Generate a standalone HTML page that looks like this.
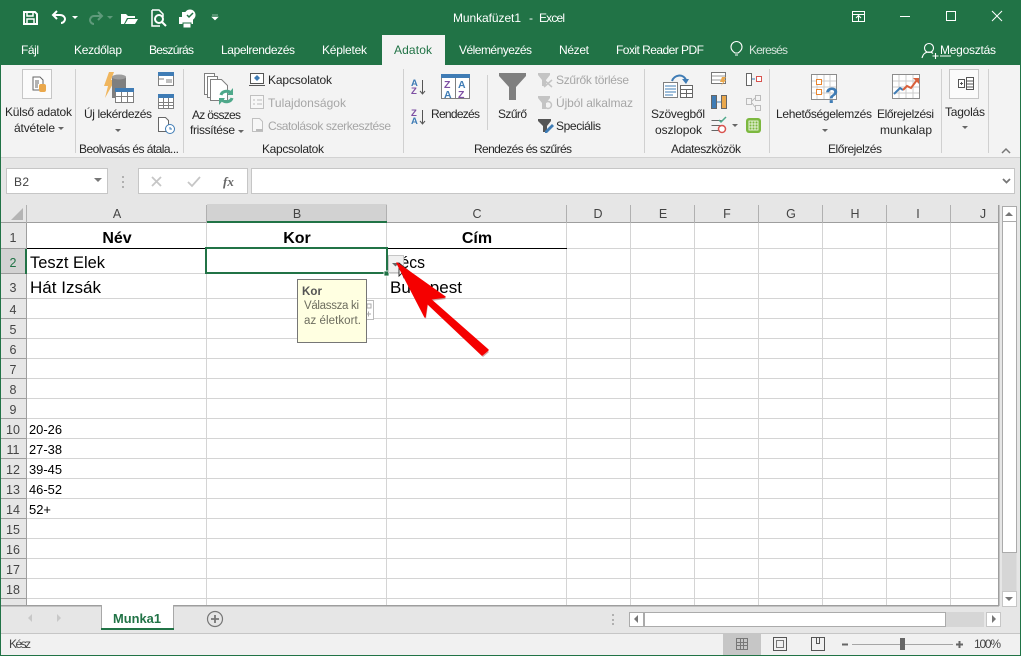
<!DOCTYPE html>
<html lang="hu"><head><meta charset="utf-8"><title>Munkafüzet1 - Excel</title>
<style>
html,body{margin:0;padding:0;background:#fff;width:1021px;height:656px;overflow:hidden}
svg{display:block;position:absolute;left:0;top:0}
text{font-family:"Liberation Sans",sans-serif;font-size:12px;fill:#262626}
.w{fill:#fff}.t{fill:#fff;font-size:12px}.g{fill:#a6a6a6}
.h{fill:#444;font-size:12.5px;text-anchor:middle}
.c{font-size:16.5px;fill:#000}.b{font-size:16px;font-weight:bold;fill:#000;text-anchor:middle}
.s{font-size:12.5px;fill:#000}
.l{stroke:#d4d4d4;stroke-width:1;fill:none}
.sep{stroke:#d0d0d0;stroke-width:1}
</style></head><body>
<svg width="1021" height="656" viewBox="0 0 1021 656" xmlns="http://www.w3.org/2000/svg">
<rect width="1021" height="656" fill="#217346"/>
<!-- ribbon -->
<rect x="1" y="65" width="1019" height="92" fill="#f3f3f3"/>
<rect x="1" y="157" width="1019" height="1" fill="#d2d2d2"/>
<rect x="1" y="158" width="1019" height="47" fill="#e6e6e6"/>
<rect x="382" y="35" width="63" height="31" fill="#f3f3f3"/>
<!-- QAT -->
<g fill="none" stroke="#fff" stroke-width="2">
<path d="M24 12h11l2 2v10H24z"/><path d="M27 12v4h6v-4" stroke-width="1.500"/><path d="M27 24v-5h7v5" stroke-width="1.500"/>
<path d="M57 11l-4 4 4 4M53 15h7c4 0 5 3 5 4s-1 4-4 4"/>
</g>
<path d="M72 16h6l-3 3z" fill="#fff"/>
<g fill="none" stroke="#5f9a7b" stroke-width="2"><path d="M98 12l4 4-4 4M102 16h-8c-3 0-4 3-4 4s1 4 4 4"/></g>
<path d="M107 16h6l-3 3z" fill="#5f9a7b"/>
<path d="M121 23v-9h5l2 2h7v2h-8l-3 6h-3zM125 24l3-5h10l-3 5z" fill="#fff"/>
<g fill="none" stroke="#fff" stroke-width="1.500"><path d="M152 10h7l4 4v3M152 10v16h8"/><circle cx="159" cy="19" r="4" stroke-width="2"/><path d="M162 22l4 4" stroke-width="2"/></g>
<rect x="179" y="17" width="14" height="7" fill="#fff"/><rect x="182" y="12" width="6" height="5" fill="#fff"/><rect x="183" y="23" width="8" height="5" fill="#fff" stroke="#217346"/>
<circle cx="190" cy="15" r="5.500" fill="#fff"/><path d="M187 15l2 2 4-4" stroke="#217346" stroke-width="1.500" fill="none"/>
<path d="M212 15h6M212 17h6l-3 3z" fill="#fff" stroke="#fff" stroke-width=".6"/>
<text x="453" y="22" class="t" textLength="68">Munkafüzet1</text>
<text x="529" y="22" class="t">-</text>
<text x="539" y="22" class="t" textLength="26">Excel</text>
<!-- window buttons -->
<g fill="none" stroke="#fff" stroke-width="1">
<path d="M852.500 11.500h12v10h-12zM852.500 14.500h12M858.500 21v-5M856 18l2.500-2.500 2.500 2.500"/>
<path d="M900 16.500h10"/><rect x="946.500" y="11.500" width="9" height="9"/><path d="M992 11l10 10M1002 11l-10 10"/>
</g>
<!-- tabs -->
<g class="tabs">
<text x="21" y="54" class="t" textLength="18">Fájl</text>
<text x="74" y="54" class="t" textLength="48">Kezdőlap</text>
<text x="149" y="54" class="t" textLength="45">Beszúrás</text>
<text x="221" y="54" class="t" textLength="74">Lapelrendezés</text>
<text x="322" y="54" class="t" textLength="45">Képletek</text>
<text x="394" y="54" style="fill:#217346" textLength="38">Adatok</text>
<text x="459" y="54" class="t" textLength="73">Véleményezés</text>
<text x="559" y="54" class="t" textLength="30">Nézet</text>
<text x="616" y="54" class="t" textLength="88">Foxit Reader PDF</text>
<text x="749" y="54" style="fill:#d5e3db" textLength="39">Keresés</text>
<text x="940" y="54" class="t" textLength="56">Megosztás</text>
</g>
<path d="M940 56h11" stroke="#fff"/>
<g fill="none" stroke="#fff" stroke-width="1.100"><path d="M735 53c-3-2-4-4-4-6a5.500 5.500 0 0 1 11 0c0 2-1 4-4 6zM735 55h3"/>
<circle cx="929" cy="48" r="4.500"/><path d="M922 58c1-4 3-6 7-6 2 0 3 .5 4 1.500M932.500 56h6M935.500 53v6"/></g>
<!-- separators -->
<g class="sep"><path d="M75.500 69v84M183.500 69v84M403.500 69v84M487.500 75v55M644.500 69v84M769.500 69v84M941.500 69v84M988.500 69v84"/></g>
<!-- Külső adatok -->
<rect x="22.500" y="69.500" width="29" height="29" fill="#fbfbfb" stroke="#c6c6c6"/>
<path d="M33 77h7l3 3v10h-10z" fill="#fff" stroke="#666"/><path d="M35 81h4M35 83h4M35 85h3M35 87h3" stroke="#666"/>
<rect x="39" y="84" width="7" height="8" rx="2" fill="#eaa84c"/>
<text x="5" y="116" textLength="67">Külső adatok</text>
<text x="14" y="132" textLength="41">átvétele</text>
<path d="M58 127h6l-3 3z" fill="#666"/>
<!-- Új lekérdezés -->
<path d="M109 72h5l-3 8h4l-10 18 3-12h-4z" fill="#f0b65e"/>
<path d="M112 78c0-4 14-4 14 0v20h-14z" fill="#7f7f7f"/><ellipse cx="119" cy="77" rx="7" ry="2.500" fill="#9d9d9d"/>
<rect x="115.500" y="88.500" width="18" height="14" fill="#fff" stroke="#7f7f7f"/><rect x="115" y="88" width="19" height="4" fill="#3f7cb5"/>
<path d="M115 96.500h19M121.500 92v10M127.500 92v10" stroke="#7f7f7f" fill="none"/>
<rect x="158.500" y="72.500" width="15" height="13" fill="#fff" stroke="#7f7f7f"/><rect x="158" y="72" width="16" height="4" fill="#3f7cb5"/><path d="M166 80h6M166 82h6M159 79h5" stroke="#7f7f7f"/>
<rect x="158.500" y="94.500" width="15" height="14" fill="#fff" stroke="#7f7f7f"/><rect x="158" y="94" width="16" height="4" fill="#3f7cb5"/><path d="M159 102.500h14M159 105.500h14M163.500 98v10M168.500 98v10" stroke="#7f7f7f"/>
<path d="M158.500 117.500h7l3 3v11h-10z" fill="#fff" stroke="#666"/><circle cx="170" cy="129" r="4.500" fill="#fff" stroke="#3f7cb5"/><path d="M170 127v2h2" stroke="#3f7cb5" fill="none"/>
<text x="84" y="118" textLength="68">Új lekérdezés</text>
<path d="M115 129h6l-3 3z" fill="#666"/>
<text x="79" y="153" textLength="100">Beolvasás és átala...</text>
<!-- Az összes -->
<g fill="#fff" stroke="#7f7f7f"><path d="M204.500 73.500h10v21h-10z"/><path d="M207.500 76.500h10v21h-10z"/><path d="M210.500 79.500h11l6 6v15h-17z"/></g>
<g fill="none" stroke="#4ea88a" stroke-width="3"><path d="M221 95c1-4 7-5 10-2"/><path d="M232 98c-1 4-7 5-10 2"/></g>
<path d="M233 88v7h-6zM219 105v-7h6z" fill="#4ea88a"/>
<text x="192" y="119" textLength="49">Az összes</text>
<text x="190" y="134" textLength="45">frissítése</text>
<path d="M238 130h6l-3 3z" fill="#666"/>
<rect x="250.500" y="73.500" width="13" height="10" fill="#fff" stroke="#555"/><path d="M249 85.500h16" stroke="#555"/><path d="M257 75l3 3-3 3-3-3z" fill="#3f7cb5"/>
<text x="268" y="84" textLength="64">Kapcsolatok</text>
<rect x="250.500" y="95.500" width="13" height="13" fill="#f7f7f7" stroke="#c0c0c0"/><path d="M253 100h2M257 100h5M253 104h2M257 104h5" stroke="#bbb"/>
<text x="268" y="107" class="g" textLength="78">Tulajdonságok</text>
<path d="M252.500 118.500h7l3 3v10h-10z" fill="#f7f7f7" stroke="#c0c0c0"/><path d="M256 130h7" stroke="#bbb" stroke-width="2"/>
<text x="268" y="130" class="g" textLength="123">Csatolások szerkesztése</text>
<text x="262" y="153" textLength="62">Kapcsolatok</text>
<!-- Rendezés -->
<text x="411" y="86" style="font-size:9.500px;font-weight:bold;fill:#3f7cb5">A</text><text x="411" y="94" style="font-size:9.500px;font-weight:bold;fill:#7d4fa3">Z</text>
<path d="M422.500 80v14M420 91l2.500 3 2.500-3" stroke="#555" fill="none"/>
<text x="411" y="116" style="font-size:9.500px;font-weight:bold;fill:#7d4fa3">Z</text><text x="411" y="124" style="font-size:9.500px;font-weight:bold;fill:#3f7cb5">A</text>
<path d="M422.500 110v14M420 121l2.500 3 2.500-3" stroke="#555" fill="none"/>
<rect x="441.500" y="74.500" width="28" height="24" fill="#fff" stroke="#7f7f7f"/><rect x="441" y="74" width="29" height="4" fill="#3f7cb5"/><path d="M455.500 78v20" stroke="#7f7f7f"/>
<text x="444" y="88" style="font-size:10.500px;font-weight:bold;fill:#7d4fa3">Z</text><text x="444" y="98" style="font-size:10.500px;font-weight:bold;fill:#3f7cb5">A</text>
<text x="458" y="88" style="font-size:10.500px;font-weight:bold;fill:#3f7cb5">A</text><text x="458" y="98" style="font-size:10.500px;font-weight:bold;fill:#7d4fa3">Z</text>
<text x="431" y="118" textLength="49">Rendezés</text>
<path d="M499 73h27v3l-10 11v13h-7V87l-10-11z" fill="#7f7f7f"/>
<text x="498" y="118" textLength="29">Szűrő</text>
<path d="M538 73h12v2l-4 5v6h-4v-6l-4-5z" fill="#c4c4c4"/><path d="M544 80l8 7M552 80l-8 7" stroke="#c4c4c4" stroke-width="1.500"/>
<text x="556" y="84" class="g" textLength="73">Szűrők törlése</text>
<path d="M538 96h12v2l-4 5v6h-4v-6l-4-5z" fill="#c4c4c4"/><circle cx="548" cy="105" r="3.500" fill="none" stroke="#c4c4c4" stroke-width="1.500"/>
<text x="556" y="107" class="g" textLength="77">Újból alkalmaz</text>
<path d="M538 119h13v2l-4 5v6h-4v-6l-5-5z" fill="#555"/><path d="M545 131l7-7 2 2-7 7h-2z" fill="#3f7cb5"/>
<text x="556" y="130" textLength="45">Speciális</text>
<text x="474" y="153" textLength="98">Rendezés és szűrés</text>
<!-- Adateszközök -->
<rect x="663.500" y="82.500" width="14" height="15" fill="#fff" stroke="#7f7f7f"/><path d="M665 86h11M665 89h11M665 92h11M665 95h8" stroke="#3f7cb5"/>
<rect x="680.500" y="85.500" width="12" height="12" fill="#fff" stroke="#666"/><path d="M681 89.500h12M681 93.500h12M686.500 89v8" stroke="#666"/>
<path d="M672 81c2-6 11-8 14-1" fill="none" stroke="#3f7cb5" stroke-width="2"/><path d="M682 79h7l-3 5z" fill="#3f7cb5"/>
<text x="651" y="118" textLength="54">Szövegből</text>
<text x="655" y="134" textLength="47">oszlopok</text>
<rect x="711.500" y="72.500" width="14" height="11" fill="#fff" stroke="#777"/><path d="M712 76h13M712 80h13" stroke="#999"/><path d="M722 77l4 0-2 3h2l-5 6 2-4h-3z" fill="#eaa84c"/>
<rect x="711.500" y="95.500" width="5" height="13" fill="#3f7cb5" stroke="#666"/><rect x="721.500" y="95.500" width="5" height="13" fill="#eaa84c" stroke="#666"/><path d="M717 102h4" stroke="#3f7cb5"/>
<path d="M711.500 120.500h10M711.500 125.500h10M711.500 130.500h10" stroke="#666"/><path d="M719 120l2 2 5-5" stroke="#4ea88a" stroke-width="1.500" fill="none"/><circle cx="722" cy="129" r="3.500" fill="#fff" stroke="#d9534f" stroke-width="1.500"/>
<path d="M732 124h6l-3 3z" fill="#666"/>
<rect x="746.500" y="73.500" width="5" height="12" fill="#fff" stroke="#666"/><path d="M752 79h3" stroke="#3f7cb5"/><rect x="756.500" y="76.500" width="5" height="5" fill="#fff" stroke="#d9534f"/>
<rect x="746.500" y="98.500" width="5" height="6" fill="#f3f3f3" stroke="#bbb"/><rect x="755.500" y="95.500" width="5" height="5" fill="#f3f3f3" stroke="#bbb"/><rect x="755.500" y="105.500" width="5" height="5" fill="#f3f3f3" stroke="#bbb"/>
<path d="M752 101l3-3M752 103l3 4" stroke="#bbb"/>
<rect x="746" y="118" width="15" height="15" rx="3" fill="#7cb83f"/><path d="M749 121h9v9h-9zM752 121v9M755 121v9M749 124h9M749 127h9" stroke="#fff" fill="none" stroke-width=".8"/>
<text x="671" y="153" textLength="70">Adateszközök</text>
<!-- Előrejelzés -->
<rect x="811.500" y="74.500" width="25" height="25" fill="#fff" stroke="#8c8c8c"/>
<path d="M817 75v24M824 75v24M830 75v24M812 81h24M812 87h24M812 93h24" stroke="#ccc"/>
<rect x="816.500" y="79.500" width="5" height="5" fill="#fff" stroke="#e8852f"/><rect x="816.500" y="89.500" width="5" height="5" fill="#fff" stroke="#e8852f"/>
<text x="825" y="103" style="font-size:22px;font-weight:bold;fill:#3f7cb5">?</text>
<text x="776" y="118" textLength="96">Lehetőségelemzés</text>
<path d="M822 129h6l-3 3z" fill="#666"/>
<path d="M892.500 74.500h27v24h-27z" fill="#fff" stroke="#8c8c8c"/><path d="M899 75v23M906 75v23M913 75v23M893 81h26M893 87h26M893 93h26" stroke="#ccc"/>
<path d="M894 94l6-6 3 2" fill="none" stroke="#3f7cb5" stroke-width="2"/><path d="M903 90l4-4 4 2 6-8" fill="none" stroke="#d9603b" stroke-width="2"/><path d="M913 78h6v6z" fill="#d9603b"/>
<text x="877" y="118" textLength="57">Előrejelzési</text>
<text x="880" y="134" textLength="52">munkalap</text>
<text x="828" y="153" textLength="54">Előrejelzés</text>
<!-- Tagolás -->
<rect x="949.500" y="69.500" width="29" height="29" fill="#fbfbfb" stroke="#c6c6c6"/>
<rect x="958.500" y="79.500" width="6" height="8" fill="#fff" stroke="#555"/><path d="M960 83.500h3M961.500 82v3" stroke="#555"/>
<rect x="966.500" y="77.500" width="7" height="12" fill="#fff" stroke="#555"/><path d="M967 81h6M967 84h6M967 87h6" stroke="#555"/>
<text x="945" y="116" textLength="40">Tagolás</text>
<path d="M962 126h6l-3 3z" fill="#666"/>
<path d="M1002 153l4-4 4 4" fill="none" stroke="#777" stroke-width="1.500"/>
<!-- formula bar -->
<rect x="6.500" y="168.500" width="101" height="25" fill="#fff" stroke="#c6c6c6"/>
<text x="14" y="186" style="fill:#444" textLength="15">B2</text>
<path d="M94 178h8l-4 4z" fill="#777"/>
<g fill="#b0b0b0"><rect x="122" y="176" width="2" height="2"/><rect x="122" y="181" width="2" height="2"/><rect x="122" y="186" width="2" height="2"/></g>
<rect x="138.500" y="168.500" width="109" height="25" fill="#fff" stroke="#c6c6c6"/>
<path d="M152 177l9 9M161 177l-9 9" stroke="#c6c6c6" stroke-width="1.800"/>
<path d="M188 182l4 4 8-9" fill="none" stroke="#c6c6c6" stroke-width="1.800"/>
<text x="223" y="186" style="font-family:'Liberation Serif',serif;font-style:italic;font-weight:bold;font-size:13px;fill:#666">fx</text>
<rect x="251.500" y="168.500" width="763" height="25" fill="#fff" stroke="#c6c6c6"/>
<path d="M1003 179l3.500 3.500 3.500-3.500" fill="none" stroke="#777" stroke-width="1.800"/>
<!-- sheet grid -->
<rect x="1" y="205" width="1019" height="428" fill="#e6e6e6"/>
<rect x="27" y="223" width="971" height="382" fill="#fff"/>
<path d="M23 208v12h-12z" fill="#b4b4b4"/>
<rect x="207" y="204" width="180" height="19" fill="#d2d2d2"/>
<rect x="1" y="249" width="26" height="25" fill="#d2d2d2"/>
<path d="M1 222.500h998" stroke="#9e9e9e"/>
<path d="M26.500 205v18M206.500 205v18M386.500 205v18M566.500 205v18M630.500 205v18M694.500 205v18M758.500 205v18M822.500 205v18M886.500 205v18M950.500 205v18" stroke="#b0b0b0"/>
<path d="M1 248.500h26M1 273.500h26M1 298.500h26M1 318.500h26M1 338.500h26M1 358.500h26M1 378.500h26M1 398.500h26M1 418.500h26M1 438.500h26M1 458.500h26M1 478.500h26M1 498.500h26M1 518.500h26M1 538.500h26M1 558.500h26M1 578.500h26M1 598.500h26" stroke="#9e9e9e"/>
<path d="M26.500 223v382" stroke="#9e9e9e"/>
<path class="l" d="M27 273.500h971M27 298.500h971M27 318.500h971M27 338.500h971M27 358.500h971M27 378.500h971M27 398.500h971M27 418.500h971M27 438.500h971M27 458.500h971M27 478.500h971M27 498.500h971M27 518.500h971M27 538.500h971M27 558.500h971M27 578.500h971M27 598.500h971M567 248.500h431"/>
<path class="l" d="M206.500 223v382M386.500 223v382M566.500 223v382M630.500 223v382M694.500 223v382M758.500 223v382M822.500 223v382M886.500 223v382M950.500 223v382"/>
<path d="M27 248.500h540" stroke="#000"/>
<rect x="207" y="221" width="180" height="2" fill="#217346"/>
<rect x="25" y="249" width="2" height="25" fill="#217346"/>
<rect x="998" y="205" width="1.500" height="401" fill="#9e9e9e"/><rect x="1" y="605" width="998" height="1.500" fill="#9e9e9e"/>
<!-- headers text -->
<text x="117" y="218" class="h">A</text><text x="297" y="218" class="h">B</text><text x="477" y="218" class="h">C</text><text x="598" y="218" class="h">D</text><text x="663" y="218" class="h">E</text><text x="727" y="218" class="h">F</text><text x="791" y="218" class="h">G</text><text x="855" y="218" class="h">H</text><text x="918" y="218" class="h">I</text><text x="983" y="218" class="h">J</text>
<g class="rows">
<text x="13" y="242" class="h">1</text><text x="13" y="267" class="h" style="fill:#217346">2</text><text x="13" y="292" class="h">3</text><text x="13" y="314" class="h">4</text><text x="13" y="334" class="h">5</text><text x="13" y="354" class="h">6</text><text x="13" y="374" class="h">7</text><text x="13" y="394" class="h">8</text><text x="13" y="414" class="h">9</text><text x="13" y="434" class="h">10</text><text x="13" y="454" class="h">11</text><text x="13" y="474" class="h">12</text><text x="13" y="494" class="h">13</text><text x="13" y="514" class="h">14</text><text x="13" y="534" class="h">15</text><text x="13" y="554" class="h">16</text><text x="13" y="574" class="h">17</text><text x="13" y="594" class="h">18</text>
</g>
<!-- cells -->
<text x="117" y="243" class="b">Név</text><text x="297" y="243" class="b">Kor</text><text x="477" y="243" class="b">Cím</text>
<text x="30" y="268" class="c" textLength="75" lengthAdjust="spacingAndGlyphs">Teszt Elek</text>
<text x="30" y="293" class="c" textLength="71" lengthAdjust="spacingAndGlyphs">Hát Izsák</text>
<text x="390" y="268" class="c" textLength="35" lengthAdjust="spacingAndGlyphs">Pécs</text>
<text x="390" y="293" class="c" textLength="72" lengthAdjust="spacingAndGlyphs">Budapest</text>
<text x="29" y="434" class="s" textLength="33" lengthAdjust="spacingAndGlyphs">20-26</text>
<text x="29" y="454" class="s" textLength="33" lengthAdjust="spacingAndGlyphs">27-38</text>
<text x="29" y="474" class="s" textLength="33" lengthAdjust="spacingAndGlyphs">39-45</text>
<text x="29" y="494" class="s" textLength="33" lengthAdjust="spacingAndGlyphs">46-52</text>
<text x="29" y="514" class="s" textLength="22" lengthAdjust="spacingAndGlyphs">52+</text>
<!-- selection -->
<rect x="206" y="248" width="181" height="25" fill="#fff" stroke="#217346" stroke-width="2"/>
<rect x="384" y="271" width="5" height="5" fill="#217346" stroke="#fff" stroke-width=".8"/>
<rect x="388.500" y="255.500" width="15" height="17" fill="#f0f0f0" stroke="#c6c6c6"/>
<path d="M392 263h7l-3.500 3.500z" fill="#666"/>
<!-- smart-tag remains + tooltip -->
<rect x="362.500" y="300.500" width="11" height="19" fill="#fff" stroke="#bbb"/><path d="M367 304h4v4h-4z" fill="none" stroke="#aaa"/><path d="M366 314h5M368.500 311.500v5" stroke="#aaa"/>
<rect x="297.500" y="279.500" width="69" height="63" fill="#ffffe1" stroke="#767676"/>
<text x="302" y="295" style="font-weight:bold;fill:#555;font-size:11.500px" textLength="20">Kor</text>
<text x="304" y="309" style="fill:#6d6d5f;font-size:11.500px" textLength="55">Válassza ki</text>
<text x="304" y="324" style="fill:#6d6d5f;font-size:11.500px" textLength="57">az életkort.</text>
<!-- cursor -->
<path d="M399 263v13l3-3 2 5 3-1-2-5h5z" fill="#fff" stroke="#222" stroke-width=".9"/>
<!-- red arrow -->
<path d="M397 263L445 297 430 299 488 350 482 355 427 303 425 317z" fill="#800000" opacity=".35" transform="translate(1,2)"/>
<path d="M397 263L445 297 430 299 488 350 482 355 427 303 425 317z" fill="#f50000" stroke="#f50000" stroke-linejoin="round" stroke-width="1.500"/>
<!-- vertical scrollbar -->
<rect x="1002.500" y="206.500" width="14" height="15" fill="#fff" stroke="#ababab"/>
<path d="M1005 216h8l-4-4z" fill="#777"/>
<rect x="1002.500" y="221.500" width="14" height="331" fill="#fff" stroke="#ababab"/>
<rect x="1002" y="553" width="14.500" height="38" fill="#d6d6d6"/>
<rect x="1002.500" y="591.500" width="14" height="15" fill="#fff" stroke="#c6c6c6"/>
<path d="M1005 597h8l-4 4z" fill="#777"/>
<!-- sheet tabs -->
<rect x="101" y="605" width="73" height="25" fill="#fff"/>
<path d="M101.500 605v24M173.500 605v24" stroke="#a8a8a8"/>
<rect x="101" y="628" width="73" height="2" fill="#217346"/>
<text x="113" y="623" style="font-weight:bold;fill:#217346;font-size:13px" textLength="48" lengthAdjust="spacingAndGlyphs">Munka1</text>
<path d="M28 618l4-4v8zM61 618l-4-4v8z" fill="#c8c8c8"/>
<circle cx="215" cy="619" r="7.500" fill="none" stroke="#777" stroke-width="1.200"/><path d="M211 619h8M215 615v8" stroke="#777" stroke-width="1.800"/>
<g fill="#b0b0b0"><rect x="612" y="614" width="2" height="2"/><rect x="612" y="619" width="2" height="2"/><rect x="612" y="623" width="2" height="2"/></g>
<rect x="629.500" y="612.500" width="14" height="14" fill="#fff" stroke="#ababab"/><path d="M634 619l4-4v8z" fill="#777"/>
<rect x="644.500" y="612.500" width="301" height="14" fill="#fff" stroke="#ababab"/>
<rect x="946" y="612" width="38" height="15" fill="#d6d6d6"/>
<rect x="986.500" y="612.500" width="14" height="14" fill="#fff" stroke="#c6c6c6"/><path d="M992 615l4 4-4 4z" fill="#777"/>
<!-- status bar -->
<rect x="1" y="633" width="1019" height="22" fill="#f1f1f1"/>
<rect x="1" y="633" width="1019" height="1" fill="#c6c6c6"/>
<text x="9" y="648" style="fill:#444" textLength="22">Kész</text>
<rect x="723" y="634" width="38" height="21" fill="#c6c6c6"/>
<rect x="736.500" y="638.500" width="11" height="11" fill="none" stroke="#777"/><path d="M740.500 638v12M743.500 638v12M736 642.500h12M736 645.500h12" stroke="#777"/>
<rect x="773.500" y="637.500" width="13" height="13" fill="none" stroke="#555"/><rect x="776.500" y="640.500" width="7" height="7" fill="none" stroke="#777"/>
<path d="M811.500 637.500h13v13h-13zM816.500 637.500v6h3v-6" fill="none" stroke="#555"/>
<path d="M842 644.500h6" stroke="#666" stroke-width="2"/>
<path d="M852 644.500h101" stroke="#a6a6a6"/>
<rect x="900" y="638" width="5" height="12" fill="#666"/>
<path d="M956 644.500h7M959.500 641v7" stroke="#666" stroke-width="2"/>
<text x="974" y="648" style="fill:#444" textLength="27">100%</text>
</svg>
</body></html>
